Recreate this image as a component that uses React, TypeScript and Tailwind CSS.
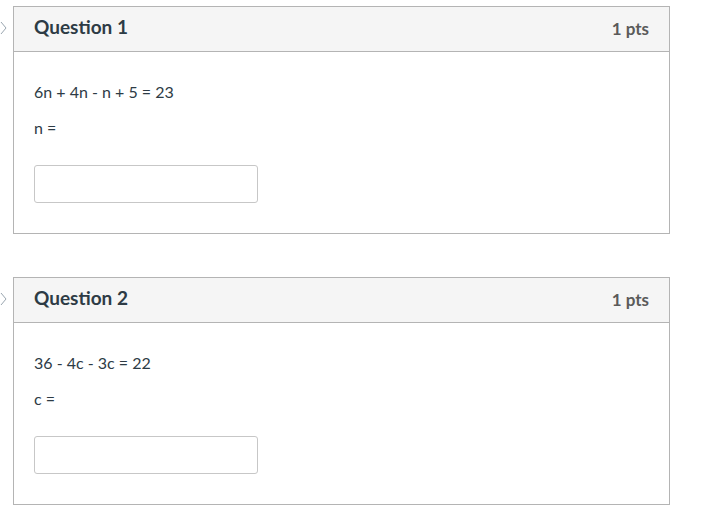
import React from "react";

function Card({ title, eq, varName }: { title: string; eq: string; varName: string }) {
  return (
    <div className="relative w-[657px] border border-[#b4b4b4] bg-white">
      <svg className="absolute left-[-14px] top-[14px]" width="8" height="14" viewBox="0 0 8 14">
        <path d="M1 1 L6 7 L1 13" fill="none" stroke="#9aa6b0" strokeWidth="1" />
      </svg>
      <div className="flex h-[45px] items-center justify-between border-b border-[#b4b4b4] bg-[#f5f5f5] pl-[20px] pr-[20px]">
        <span className="mb-[3px] text-[19px] font-bold text-[#2d3b45]">{title}</span>
        <span className="text-[17px] font-bold text-[#5a5a5a]">1 pts</span>
      </div>
      <div className="px-[20px] pt-[30px] pb-[30px] text-[16px] text-[#2d3b45]">
        <div className="leading-[20px]">{eq}</div>
        <div className="mt-[16px] leading-[20px]">{varName} =</div>
        <div className="mt-[27px] h-[38px] w-[224px] rounded-[3px] border border-[#c7c7c7] bg-white" />
      </div>
    </div>
  );
}

export default function App() {
  return (
    <div
      className="min-h-[529px] w-[701px] bg-white pl-[13px] pt-[6px]"
      style={{ fontFamily: "Lato, 'Liberation Sans', sans-serif" }}
    >
      <div className="flex flex-col gap-[43px]">
        <Card title="Question 1" eq="6n + 4n - n + 5 = 23" varName="n" />
        <Card title="Question 2" eq="36 - 4c - 3c = 22" varName="c" />
      </div>
    </div>
  );
}
